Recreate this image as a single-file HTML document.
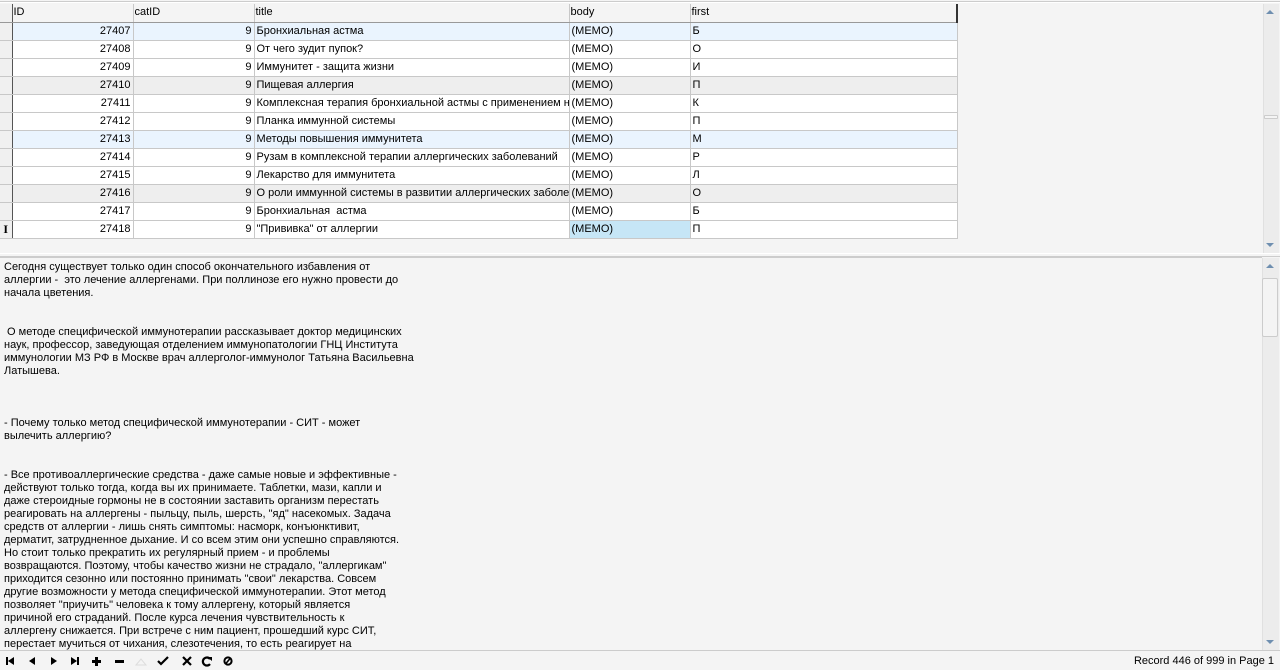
<!DOCTYPE html>
<html><head><meta charset="utf-8"><style>
*{margin:0;padding:0;box-sizing:border-box}
body{width:1280px;height:670px;background:#f4f4f4;font-family:"Liberation Sans",sans-serif;font-size:11px;color:#000;position:relative;overflow:hidden}
.topline{position:absolute;left:0;top:1px;width:1280px;height:2px;border-top:1px solid #ccc;border-bottom:1px solid #fff}
table{position:absolute;left:0;top:4px;border-collapse:collapse;table-layout:fixed;width:957px}
td{height:18px;border-right:1px solid #c8c8c8;border-bottom:1px solid #c8c8c8;padding:0 2px;white-space:nowrap;overflow:hidden;line-height:17px;background:#fff}
tr.h td{background:#f4f4f4;border-bottom:1px solid #999;padding-left:1px}
tr.h td:last-child{border-right:2px solid #333}
td.ind{background:#f0f0f0;border-right:1px solid #555;padding:0}
td.r{text-align:right}
tr.b td{background:#eaf4fe}
tr.g td{background:#eeeeee}
tr td.ind{background:#f0f0f0}
td.sel{background:#c6e6f6!important}
.sb{position:absolute;background:#ececec;border-left:1px solid #e0e0e0}
.tri{position:absolute;width:0;height:0;border-left:4px solid transparent;border-right:4px solid transparent}
.memo{position:absolute;left:0;top:257px;width:1262px;height:393px;border-top:1px solid #ccc;overflow:hidden}
.memo div{position:absolute;left:4px;white-space:pre}
.status{position:absolute;right:6px;top:655px;font-size:11px}
</style></head><body>
<div class="topline"></div>
<table>
<colgroup><col style="width:12px"><col style="width:121px"><col style="width:121px"><col style="width:315px"><col style="width:121px"><col style="width:267px"></colgroup>
<tr class="h"><td class="ind"></td><td>ID</td><td>catID</td><td>title</td><td>body</td><td>first</td></tr>
<tr class="b"><td class="ind"></td><td class="r">27407</td><td class="r">9</td><td>Бронхиальная астма</td><td>(MEMO)</td><td>Б</td></tr>
<tr><td class="ind"></td><td class="r">27408</td><td class="r">9</td><td>От чего зудит пупок?</td><td>(MEMO)</td><td>О</td></tr>
<tr><td class="ind"></td><td class="r">27409</td><td class="r">9</td><td>Иммунитет - защита жизни</td><td>(MEMO)</td><td>И</td></tr>
<tr class="g"><td class="ind"></td><td class="r">27410</td><td class="r">9</td><td>Пищевая аллергия</td><td>(MEMO)</td><td>П</td></tr>
<tr><td class="ind"></td><td class="r">27411</td><td class="r">9</td><td>Комплексная терапия бронхиальной астмы с применением не</td><td>(MEMO)</td><td>К</td></tr>
<tr><td class="ind"></td><td class="r">27412</td><td class="r">9</td><td>Планка иммунной системы</td><td>(MEMO)</td><td>П</td></tr>
<tr class="b"><td class="ind"></td><td class="r">27413</td><td class="r">9</td><td>Методы повышения иммунитета</td><td>(MEMO)</td><td>М</td></tr>
<tr><td class="ind"></td><td class="r">27414</td><td class="r">9</td><td>Рузам в комплексной терапии аллергических заболеваний</td><td>(MEMO)</td><td>Р</td></tr>
<tr><td class="ind"></td><td class="r">27415</td><td class="r">9</td><td>Лекарство для иммунитета</td><td>(MEMO)</td><td>Л</td></tr>
<tr class="g"><td class="ind"></td><td class="r">27416</td><td class="r">9</td><td>О роли иммунной системы в развитии аллергических заболев</td><td>(MEMO)</td><td>О</td></tr>
<tr><td class="ind"></td><td class="r">27417</td><td class="r">9</td><td>Бронхиальная&nbsp; астма</td><td>(MEMO)</td><td>Б</td></tr>
<tr><td class="ind" style="font-family:'Liberation Serif',serif;font-weight:bold;font-size:12px;text-align:center">I</td><td class="r">27418</td><td class="r">9</td><td>"Прививка" от аллергии</td><td class="sel">(MEMO)</td><td>П</td></tr>
</table>
<div class="sb" style="left:1263px;top:4px;width:16px;height:249px"></div>
<div class="tri" style="left:1266px;top:10px;border-bottom:4px solid #6f8fb0"></div>
<div style="position:absolute;left:1264px;top:115px;width:14px;height:4px;border:1px solid #ccc;background:#f4f4f4;border-radius:1px"></div>
<div class="tri" style="left:1266px;top:243px;border-top:4px solid #6f8fb0"></div>
<div style="position:absolute;left:0;top:253px;width:1280px;height:4px;border-top:1px solid #fff;border-bottom:1px solid #ccc"></div>
<div class="memo">
<div style="top:3px">Сегодня существует только один способ окончательного избавления от</div>
<div style="top:16px">аллергии -  это лечение аллергенами. При поллинозе его нужно провести до</div>
<div style="top:29px">начала цветения.</div>
<div style="top:68px"> О методе специфической иммунотерапии рассказывает доктор медицинских</div>
<div style="top:81px">наук, профессор, заведующая отделением иммунопатологии ГНЦ Института</div>
<div style="top:94px">иммунологии МЗ РФ в Москве врач аллерголог-иммунолог Татьяна Васильевна</div>
<div style="top:107px">Латышева.</div>
<div style="top:159px">- Почему только метод специфической иммунотерапии - СИТ - может</div>
<div style="top:172px">вылечить аллергию?</div>
<div style="top:211px">- Все противоаллергические средства - даже самые новые и эффективные -</div>
<div style="top:224px">действуют только тогда, когда вы их принимаете. Таблетки, мази, капли и</div>
<div style="top:237px">даже стероидные гормоны не в состоянии заставить организм перестать</div>
<div style="top:250px">реагировать на аллергены - пыльцу, пыль, шерсть, "яд" насекомых. Задача</div>
<div style="top:263px">средств от аллергии - лишь снять симптомы: насморк, конъюнктивит,</div>
<div style="top:276px">дерматит, затрудненное дыхание. И со всем этим они успешно справляются.</div>
<div style="top:289px">Но стоит только прекратить их регулярный прием - и проблемы</div>
<div style="top:302px">возвращаются. Поэтому, чтобы качество жизни не страдало, "аллергикам"</div>
<div style="top:315px">приходится сезонно или постоянно принимать "свои" лекарства. Совсем</div>
<div style="top:328px">другие возможности у метода специфической иммунотерапии. Этот метод</div>
<div style="top:341px">позволяет "приучить" человека к тому аллергену, который является</div>
<div style="top:354px">причиной его страданий. После курса лечения чувствительность к</div>
<div style="top:367px">аллергену снижается. При встрече с ним пациент, прошедший курс СИТ,</div>
<div style="top:380px">перестает мучиться от чихания, слезотечения, то есть реагирует на</div>
</div>
<div class="sb" style="left:1262px;top:258px;width:17px;height:392px"></div>
<div class="tri" style="left:1266px;top:264px;border-bottom:4px solid #6f8fb0"></div>
<div style="position:absolute;left:1262px;top:278px;width:16px;height:59px;border:1px solid #ccc;background:#f4f4f4;border-radius:2px"></div>
<div class="tri" style="left:1266px;top:640px;border-top:4px solid #6f8fb0"></div>
<div style="position:absolute;left:0;top:650px;width:1280px;height:1px;background:#ccc"></div>
<svg style="position:absolute;left:0;top:651px" width="240" height="19" viewBox="0 0 240 19">
<g fill="#000">
<rect x="6" y="6" width="2" height="8"/><polygon points="8,10 14,6 14,14"/>
<polygon points="29,10 35,6 35,14"/>
<polygon points="57,10 51,6 51,14"/>
<polygon points="77,10 71,6 71,14"/><rect x="77" y="6" width="2" height="8"/>
<rect x="92" y="9" width="9" height="3"/><rect x="95" y="6" width="3" height="9"/>
<rect x="115" y="9" width="9" height="3"/>
</g>
<polygon points="136,14 141,8 146,14" fill="none" stroke="#ddd" stroke-width="1"/>
<path d="M158 10 L161 13 L168 6" fill="none" stroke="#000" stroke-width="2.2"/>
<path d="M183 6 L191 14 M191 6 L183 14" fill="none" stroke="#000" stroke-width="2.2"/>
<path d="M210 8 A4 4 0 1 0 210 13" fill="none" stroke="#000" stroke-width="2.2"/>
<polygon points="207,6 212,6 212,10" fill="#000"/>
<circle cx="228" cy="10" r="3.6" fill="none" stroke="#000" stroke-width="2"/>
<path d="M225.5 13 L230.5 7" stroke="#000" stroke-width="1.6"/>
</svg>
<div class="status">Record 446 of 999 in Page 1</div>
</body></html>
